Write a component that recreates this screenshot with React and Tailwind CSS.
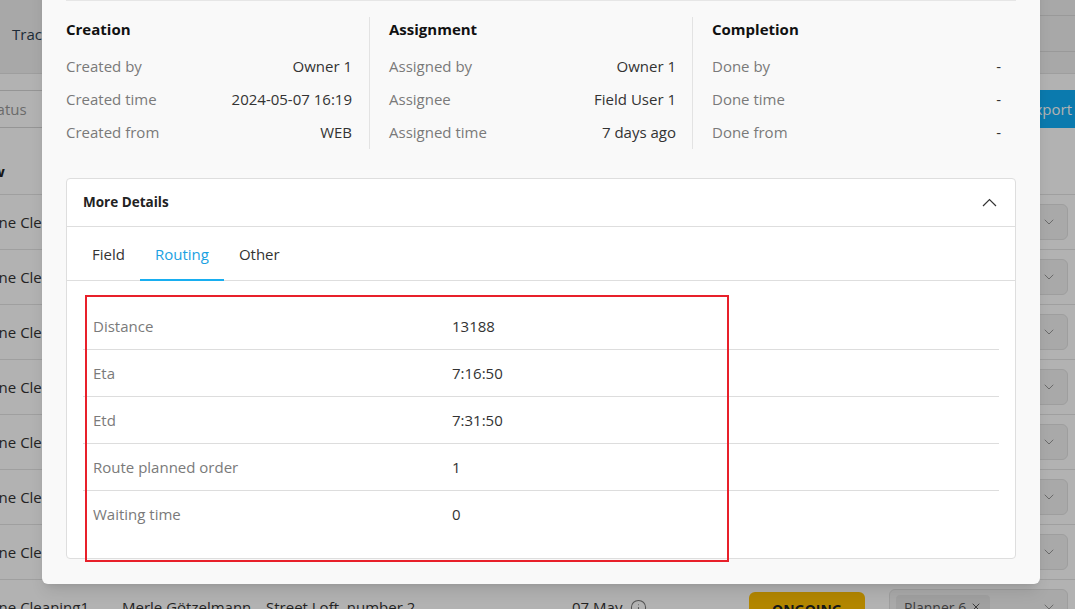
import { Info, ChevronDown, X } from "lucide-react";

const summary = [
  {
    title: "Creation",
    rows: [
      ["Created by", "Owner 1"],
      ["Created time", "2024-05-07 16:19"],
      ["Created from", "WEB"],
    ],
  },
  {
    title: "Assignment",
    rows: [
      ["Assigned by", "Owner 1"],
      ["Assignee", "Field User 1"],
      ["Assigned time", "7 days ago"],
    ],
  },
  {
    title: "Completion",
    rows: [
      ["Done by", "-"],
      ["Done time", "-"],
      ["Done from", "-"],
    ],
  },
];

const routing = [
  ["Distance", "13188"],
  ["Eta", "7:16:50"],
  ["Etd", "7:31:50"],
  ["Route planned order", "1"],
  ["Waiting time", "0"],
];

const colClasses = [
  "w-[304px] pr-[17px] border-r border-[#e3e3e3]",
  "w-[323px] pl-[19px] pr-[16px] border-r border-[#e3e3e3]",
  "flex-1 pl-[19px] pr-[15px]",
];

const tabs = ["Field", "Routing", "Other"];

function BackgroundRow() {
  return (
    <div className="flex items-center h-[55px] shrink-0 border-b border-[#e4e4e4] text-[15px] text-[#333] ml-[-38px]">
      <div className="w-[160px] shrink-0 whitespace-nowrap">Routine Cleaning1</div>
      <div className="w-[144px] shrink-0 whitespace-nowrap">Merle Götzelmann</div>
      <div className="w-[306px] shrink-0 whitespace-nowrap">Street Loft, number 2</div>
      <div className="w-[177px] shrink-0 flex items-center gap-[8px] whitespace-nowrap">
        07 May
        <Info size={17} strokeWidth={1.5} className="text-[#777]" />
      </div>
      <div className="w-[116px] h-[34px] mt-[4px] shrink-0 rounded-md bg-[#ffc000] flex items-center justify-center text-[14px] font-bold text-[#222]">
        ONGOING
      </div>
      <div className="ml-[24px] w-[179px] h-[36px] shrink-0 rounded-md border border-[#e2e2e2] bg-[#f3f3f3] flex items-center justify-between px-[6px]">
        <span className="flex items-center gap-1 rounded bg-[#e6e6e6] px-2 h-[24px] text-[14px] text-[#555]">
          Planner 6 <X size={12} />
        </span>
        <ChevronDown size={16} strokeWidth={1.5} className="text-[#999] mr-[4px]" />
      </div>
    </div>
  );
}

export default function App() {
  return (
    <div className="relative w-[1075px] h-[609px] overflow-hidden bg-white font-['Open_Sans',sans-serif]">
      {/* page behind the modal */}
      <div className="flex flex-col">
        <div className="h-[74px] bg-[#f1f1f1] border-b border-[#e2e2e2] flex items-center justify-between">
          <span className="pl-[12px] pb-[4px] text-[15px] text-[#2c3e50]">Tracking</span>
          <div className="h-[37px] w-[220px] border-y border-[#dcdcdc] self-start mt-[15px]" />
        </div>
        <div className="h-[16px]" />
        <div className="h-[38px] flex items-center justify-between">
          <div className="ml-[-30px] w-[220px] h-[38px] border border-[#d6d6d6] rounded flex items-center pl-[12px] text-[15px] text-[#999]">
            Status
          </div>
          <div className="mr-[-10px] h-[38px] rounded bg-[#10aff9] flex items-center pl-[20px] pr-[13px] text-[15px] text-white">
            Export
          </div>
        </div>
        <div className="h-[67px] border-b border-[#e4e4e4] flex items-end pb-[12px] ml-[-66px] text-[15px] font-bold text-[#222]">
          Overview
        </div>
        {Array.from({ length: 8 }).map((_, i) => (
          <BackgroundRow key={i} />
        ))}
      </div>

      <div className="absolute inset-0 bg-black/30" />

      {/* modal */}
      <div className="absolute left-[42px] top-[-60px] w-[998px] bg-[#f9f9f9] rounded-b-md shadow-lg px-[24px] pb-[25px]">
        <div className="h-[60px]" />
        <div className="border-t border-[#e6e6e6] pt-[16px] flex">
          {summary.map((col, ci) => (
            <div key={col.title} className={colClasses[ci]}>
              <div className="h-[24px] leading-[24px] text-[15px] font-bold text-[#111]">{col.title}</div>
              <div className="mt-[9px]">
                {col.rows.map(([label, value]) => (
                  <div key={label} className="h-[33px] flex items-center justify-between text-[15px]">
                    <span className="text-[#7a7a7a]">{label}</span>
                    <span className="text-[#333]">{value}</span>
                  </div>
                ))}
              </div>
            </div>
          ))}
        </div>

        <div className="mt-[29px] bg-white border border-[#dedede] rounded">
          <div className="h-[48px] border-b border-[#dedede] flex items-center justify-between px-[16px]">
            <span className="text-[13.5px] font-bold text-[#222]">More Details</span>
            <svg width="15" height="9" viewBox="0 0 15 9" fill="none" className="mr-[2px]">
              <polyline points="1,8 7.5,1.5 14,8" stroke="#333" strokeWidth="1.2" />
            </svg>
          </div>
          <div className="h-[54px] border-b border-[#dedede] flex pl-[10px]">
            {tabs.map((t) => (
              <div
                key={t}
                className={`px-[15px] pt-[2px] flex items-center text-[15px] border-b-2 mb-[-1px] ${
                  t === "Routing" ? "text-[#1ba1e2] border-[#18aef0]" : "text-[#333] border-transparent"
                }`}
              >
                {t}
              </div>
            ))}
          </div>
          <div className="px-[16px] pt-[22px] pb-[20px]">
            {routing.map(([label, value], i) => (
              <div
                key={label}
                className={`h-[47px] flex items-center text-[15px] ${i < routing.length - 1 ? "border-b border-[#dddddd]" : ""}`}
              >
                <span className="w-[369px] shrink-0 pl-[10px] text-[#7a7a7a]">{label}</span>
                <span className="text-[#333]">{value}</span>
              </div>
            ))}
          </div>
        </div>
      </div>

      {/* annotation box */}
      <div className="absolute left-[85px] top-[295px] w-[644px] h-[267px] border-2 border-[#e8202a] pointer-events-none" />
    </div>
  );
}
